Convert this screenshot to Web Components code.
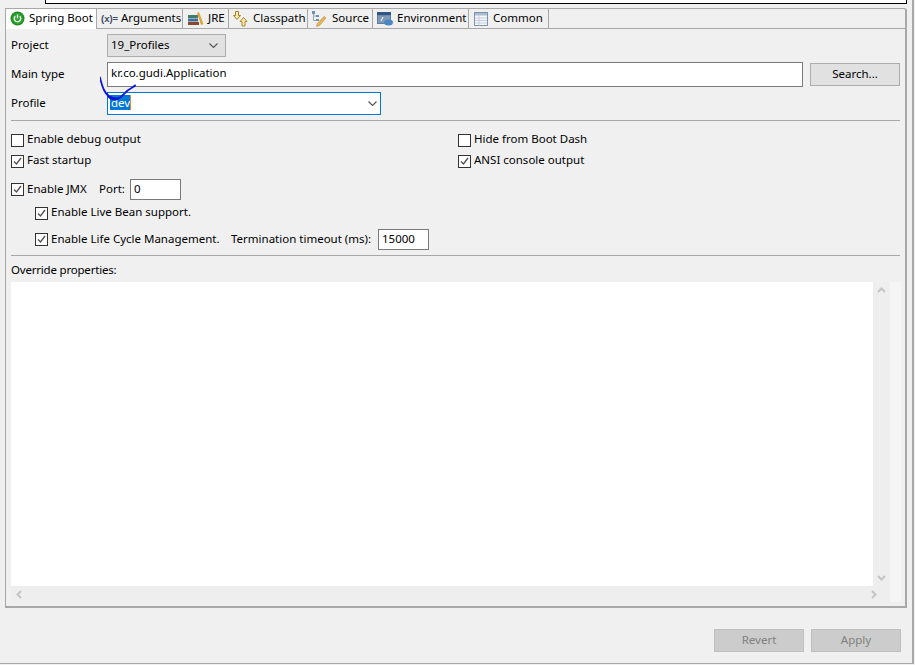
<!DOCTYPE html>
<html><head><meta charset="utf-8">
<style>
html,body{margin:0;padding:0;background:#f0f0f0;}
body{width:915px;height:665px;overflow:hidden;font:11.5px/16px "Noto Sans","Noto Sans CJK KR",sans-serif;color:#000;}
</style></head><body>
<launch-page>
  <launch-tabs slot="tabs">
    <launch-tab active w="91" gap="4" pad="4"><svg width="15" height="15" viewBox="0 0 15 15"><circle cx="7.5" cy="7.5" r="7" fill="#1f8a24"/><circle cx="7.5" cy="7.5" r="5.5" fill="#2ea52f"/><path d="M5.3 5.3a3.2 3.2 0 1 0 4.4 0" fill="none" stroke="#fff" stroke-width="1.3"/><path d="M7.5 3.500v3.800" stroke="#fff" stroke-width="1.3"/></svg>Spring Boot</launch-tab>
    <launch-tab w="86" gap="3" pad="4"><span style="font:bold 9.500px/16px 'Liberation Sans',sans-serif;color:#3d4a63;width:17px;white-space:nowrap">(x)=</span>Arguments</launch-tab>
    <launch-tab w="46" gap="4" pad="5"><svg width="16" height="14" viewBox="0 0 16 14"><rect x="0" y="3" width="10" height="3" fill="#3f7d6b"/><rect x="0" y="6.500" width="10" height="3" fill="#3f6f9a"/><rect x="0" y="10" width="11" height="3" fill="#8a4a32"/><path d="M9 1l2-1 4.500 12-2.500 1z" fill="#dfa63c"/></svg>JRE</launch-tab>
    <launch-tab w="79" gap="5" pad="3"><svg width="16" height="16" viewBox="0 0 16 16" fill="#fbe9a8" stroke="#a5802c"><path d="M3.500 .5h3v4h2L5 8.500 1.500 4.500h2z"/><path d="M11.500 6.500l3.500 4h-2v4.500h-3V10.500h-2z" stroke="#b08a32"/></svg>Classpath</launch-tab>
    <launch-tab w="65" gap="5" pad="3"><svg width="16" height="17" viewBox="0 0 16 17"><g fill="#6f8fb5"><rect x="1" y="1" width="3" height="3"/><rect x="5" y="5" width="3" height="2"/><rect x="5" y="9" width="3" height="2"/></g><path d="M2.500 4v6.500H5M2.500 6H5" stroke="#8fa7c4" fill="none"/><path d="M13 6.500l2 1.500-6.500 7.500-3 1 .8-3z" fill="#e9b458" stroke="#b98a3a" stroke-width=".6"/></svg>Source</launch-tab>
    <launch-tab w="96" gap="4" pad="4"><svg width="16" height="15" viewBox="0 0 16 15"><rect x="0" y="1" width="14" height="12" fill="#5c7ea3"/><rect x="0" y="1" width="14" height="3" fill="#2e5585"/><rect x="1" y="4.500" width="12" height="7.500" fill="#8099b6"/><path d="M4 10l2-4" stroke="#fff"/><ellipse cx="11.500" cy="11.500" rx="4.500" ry="3" fill="#4a86c4"/></svg>Environment</launch-tab>
    <launch-tab w="80" gap="5" pad="5"><svg width="14" height="14" viewBox="0 0 14 14"><rect x=".5" y=".5" width="13" height="13" fill="#f4f7fb" stroke="#7f93ad"/><rect x="1" y="1" width="12" height="2.500" fill="#a9bcd3"/><path d="M1 6h12M1 8.500h12M1 11h12M5 3.500v10" stroke="#c3cfdd"/></svg>Common</launch-tab>
  </launch-tabs>

  <form-row>
    <span slot="label">Project</span>
    <combo-box w="119" h="23">19_Profiles</combo-box>
  </form-row>
  <form-row style="margin-top:5px">
    <span slot="label">Main type</span>
    <text-field grow h="25" up>kr.co.gudi.Application</text-field>
    <push-button w="90" h="23" style="margin-left:7px">Search...</push-button>
  </form-row>
  <form-row style="margin-top:5px">
    <span slot="label">Profile</span>
    <profile-field>dev</profile-field>
  </form-row>
  <h-rule style="margin-top:5px"></h-rule>
  <two-cols style="margin-top:11px">
    <check-box>Enable debug output</check-box>
    <check-box>Hide from Boot Dash</check-box>
    <check-box checked>Fast startup</check-box>
    <check-box checked>ANSI console output</check-box>
  </two-cols>
  <inline-row style="margin-top:10px">
    <check-box checked style="width:88px">Enable JMX</check-box>
    <span style="width:31px">Port:</span>
    <text-field w="51" h="21">0</text-field>
  </inline-row>
  <inline-row style="margin:5px 0 0 24px;height:16px">
    <check-box checked>Enable Live Bean support.</check-box>
  </inline-row>
  <inline-row style="margin:8px 0 0 24px">
    <check-box checked style="width:196px">Enable Life Cycle Management.</check-box>
    <span style="width:147px">Termination timeout (ms):</span>
    <text-field w="51" h="21">15000</text-field>
  </inline-row>
  <h-rule style="margin-top:5px"></h-rule>
  <div style="margin-top:6px;height:20px;line-height:16px;letter-spacing:-.2px">Override properties:</div>
  <scroll-area></scroll-area>
  <scribble-mark></scribble-mark>
</launch-page>
<script>
function def(name, css, html, init){
  customElements.define(name, class extends HTMLElement{
    constructor(){super();const r=this.attachShadow({mode:'open'});r.innerHTML='<style>'+css+'</style>'+html;}
    connectedCallback(){ if(init) init(this); }
  });
}
const size=e=>{ if(e.hasAttribute('w')) e.style.width=e.getAttribute('w')+'px'; if(e.hasAttribute('h')) e.style.height=e.getAttribute('h')+'px'; };

def('launch-page',`:host{display:block;position:relative;height:664px;box-sizing:border-box;border-right:2px solid #a8a8a8;border-bottom:1px solid #a8a8a8;margin-right:1px;padding:0}
 .top{position:absolute;left:45px;top:-4px;width:860px;height:6px;background:#fff;border:1px solid #000;box-sizing:content-box}
 .panel{position:absolute;box-sizing:border-box;left:5px;top:8px;width:902px;height:600px;border:2px solid #a8a8a8;border-width:1px 2px 2px 1px;border-top-right-radius:3px}
 .body{position:relative;padding:5px 5px 0 5px}
 .btns{position:absolute;top:629px;left:714px;display:flex;gap:7px}`,
 `<div class="top"></div><div class="panel"><slot name="tabs"></slot><div class="body"><slot></slot></div></div>
  <div class="btns"><push-button w="90" h="23" disabled>Revert</push-button><push-button w="90" h="23" disabled>Apply</push-button></div>`);

def('launch-tabs',`:host{display:flex;height:20px;box-sizing:border-box;border-bottom:1px solid #a8a8a8}`,`<slot></slot>`);
def('launch-tab',`:host{display:flex;align-items:center;box-sizing:border-box;height:19px;padding-bottom:2px;border-right:1px solid #a8a8a8;white-space:nowrap;flex:none}
 :host([active]){height:20px;padding-bottom:3px;z-index:1;border-top-left-radius:3px;background:#fff}
 ::slotted(svg),::slotted(span){flex:none;margin-top:2px}`,`<slot></slot>`,
 e=>{e.style.width=e.getAttribute('w')+'px';e.style.paddingLeft=e.getAttribute('pad')+'px';e.style.gap=e.getAttribute('gap')+'px';});

def('form-row',`:host{display:flex;align-items:center}
 .l{width:96px;flex:none;padding-bottom:2px}`,`<div class="l"><slot name="label"></slot></div><slot></slot>`);
def('inline-row',`:host{display:flex;align-items:center}
 ::slotted(span){flex:none;padding-bottom:2px}`,`<slot></slot>`);
def('two-cols',`:host{display:grid;grid-template-columns:447px 1fr;row-gap:5px}`,`<slot></slot>`);
def('h-rule',`:host{display:block;height:1px;background:#a8a8a8}`,``);

def('combo-box',`:host{display:flex;align-items:center;box-sizing:border-box;border:1px solid #adadad;background:#e1e1e1;padding:0 3px 2px;justify-content:space-between}
 svg{margin:2px 4px 0 0}`,`<slot></slot><svg width="9" height="5" viewBox="0 0 9 5"><path d="M.5.500L4.500 4.500 8.500.500" fill="none" stroke="#555" stroke-width="1.100"/></svg>`,size);
def('text-field',`:host{display:flex;align-items:center;box-sizing:border-box;border:1px solid #7a7a7a;background:#fff;padding:0 3px 2px;flex:none}
 :host([grow]){flex:0 0 696px}
 :host([up]){padding-bottom:4px}`,`<slot></slot>`,size);
def('profile-field',`:host{display:flex;align-items:center;justify-content:space-between;box-sizing:border-box;width:274px;height:23px;border:1px solid #0078d7;background:#fff;padding:0 3px 2px 2px}
 svg{margin-top:2px}
 .s{background:#0078d7;color:#fff;display:block;height:15px;line-height:15px;padding:0 0 0 1px;width:19px;border-right:1px solid #e8892c}`,
 `<span class="s"><slot></slot></span><svg width="9" height="5" viewBox="0 0 9 5"><path d="M.5.500L4.500 4.500 8.500.500" fill="none" stroke="#555" stroke-width="1.100"/></svg>`);
def('push-button',`:host{display:flex;align-items:center;justify-content:center;box-sizing:border-box;border:1px solid #adadad;background:#e1e1e1;flex:none;padding-bottom:2px}
 :host([disabled]){background:#ccc;border-color:#bfbfbf;color:#808080}`,`<slot></slot>`,size);
def('check-box',`:host{display:inline-flex;align-items:center;white-space:nowrap;height:16px;flex:none}
 .b{width:11px;height:11px;border:1px solid #333;background:#fff;margin-right:3px;display:block;flex:none;position:relative}
 .t{padding-bottom:2px}
 svg{display:none;position:absolute;left:0;top:0}
 :host([checked]) svg{display:block}`,
 `<span class="b"><svg width="11" height="11" viewBox="0 0 11 11"><path d="M2 5.500l2.500 2.500 4.500-6" fill="none" stroke="#555" stroke-width="1.400"/></svg></span><span class="t"><slot></slot></span>`);
def('scroll-area',`:host{display:block;height:320px;width:890px;position:relative}
 .g{display:grid;grid-template-columns:862px 17px 11px;grid-template-rows:304px 16px;height:100%}
 .a{background:#fff}.v{background:#eee;display:flex;flex-direction:column;justify-content:space-between;align-items:center;padding:5px 0;box-sizing:border-box}
 .s{background:#f5f5f5;grid-row:1/3;grid-column:3}
 .h{background:#eee;display:flex;justify-content:space-between;align-items:center;padding:0 5px;grid-column:1/3}
 svg{display:block}`,
 `<div class="g"><div class="a"></div><div class="v"><svg width="9" height="6" viewBox="0 0 9 6"><path d="M1 5l3.500-3.500L8 5" fill="none" stroke="#c4c4c4" stroke-width="2"/></svg><svg width="9" height="6" viewBox="0 0 9 6"><path d="M1 1l3.500 3.500L8 1" fill="none" stroke="#c4c4c4" stroke-width="2"/></svg></div><div class="s"></div>
 <div class="h"><svg width="6" height="9" viewBox="0 0 6 9"><path d="M5 1L1.500 4.500 5 8" fill="none" stroke="#c4c4c4" stroke-width="2"/></svg><svg width="6" height="9" viewBox="0 0 6 9" style="margin-right:8px"><path d="M1 1l3.500 3.500L1 8" fill="none" stroke="#c4c4c4" stroke-width="2"/></svg></div></div>`);
def('scribble-mark',`:host{position:absolute;left:94px;top:46px;display:block;width:50px;height:40px;pointer-events:none}`,
 `<svg width="50" height="40" viewBox="0 0 50 40"><path d="M0 2.500C1 7 2 11 4 15c2 4 5 7 9 8 3 .5 6 .5 8-1 3-3 6-7 12-10 1-.5 1.500-1 2-1.500M8 21c2 3 5 4 10 3" fill="none" stroke="#0a14d8" stroke-width="1.800" stroke-linecap="round"/></svg>`);
</script>
</body></html>
